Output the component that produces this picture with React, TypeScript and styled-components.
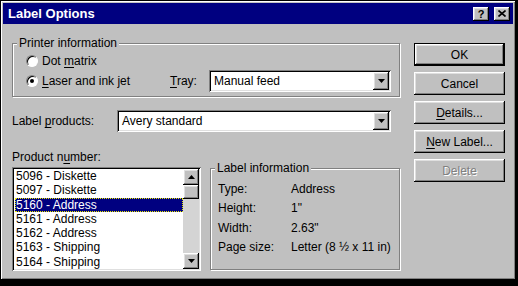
import { Fragment } from "react";
import styled, { createGlobalStyle, css } from "styled-components";

const GlobalStyle = createGlobalStyle`
  html, body { margin: 0; padding: 0; background: #000; }
  body {
    font-family: "Liberation Sans", Arial, sans-serif;
    font-size: 12px;
    color: #000;
  }
`;

const raised = css`
  box-shadow: inset -1px -1px #000, inset 1px 1px #fff, inset -2px -2px #808080,
    inset 2px 2px #dfdfdf;
`;

const sunken = css`
  box-shadow: inset 1px 1px #808080, inset -1px -1px #fff, inset 2px 2px #000,
    inset -2px -2px #dfdfdf;
`;

const Window = styled.div`
  width: 516px;
  height: 280px;
  box-sizing: border-box;
  background: #c0c0c0;
  border: 1px solid #000;
  box-shadow: inset 1px 1px #fff, inset -1px -1px #808080;
  padding: 2px;
  display: flex;
  flex-direction: column;
`;

const TitleBar = styled.div`
  height: 21px;
  background: #000080;
  display: flex;
  align-items: center;
  padding: 0 3px 0 5px;
`;

const Title = styled.div`
  flex: 1;
  color: #fff;
  font-weight: bold;
  font-size: 13px;
`;

const TitleButton = styled.div<{ $gap?: number }>`
  width: 16px;
  height: 14px;
  background: #c0c0c0;
  ${raised};
  display: flex;
  align-items: center;
  justify-content: center;
  font-weight: bold;
  font-size: 11px;
  margin-left: ${(p) => p.$gap ?? 0}px;
`;

const Body = styled.div`
  display: grid;
  grid-template-columns: 388px 91px;
  column-gap: 14px;
  padding: 19px 0 0 9px;
`;

const LeftColumn = styled.div`
  display: flex;
  flex-direction: column;
`;

const Group = styled.div<{ $padTop: number }>`
  position: relative;
  border: 1px solid #808080;
  box-shadow: inset 1px 1px #fff, 1px 1px #fff;
  padding: ${(p) => p.$padTop}px 8px 4px 13px;
`;

const Caption = styled.span`
  position: absolute;
  top: -7px;
  left: 4px;
  padding: 0 2px;
  line-height: 13px;
  background: #c0c0c0;
`;

const RadioRow = styled.div<{ $h: number }>`
  height: ${(p) => p.$h}px;
  display: flex;
  align-items: center;
`;

const RadioLabel = styled.label`
  width: 144px;
  display: flex;
  align-items: center;
  gap: 4px;
`;

const RadioCircle = styled.span<{ $checked?: boolean }>`
  width: 12px;
  height: 12px;
  border-radius: 50%;
  box-sizing: border-box;
  background: #fff;
  border: 1px solid;
  border-color: #808080 #fff #fff #808080;
  box-shadow: inset 1px 1px #000;
  display: flex;
  align-items: center;
  justify-content: center;
  &::after {
    content: "";
    width: 4px;
    height: 4px;
    border-radius: 50%;
    background: ${(p) => (p.$checked ? "#000" : "transparent")};
  }
`;

const Key = styled.span`
  text-decoration: underline;
  text-underline-offset: 2px;
`;

const FieldLabel = styled.span<{ $w: number }>`
  width: ${(p) => p.$w}px;
  flex: none;
`;

const Combo = styled.div<{ $w: number }>`
  width: ${(p) => p.$w}px;
  height: 22px;
  box-sizing: border-box;
  background: #fff;
  ${sunken};
  display: flex;
  align-items: center;
  padding: 2px 2px 2px 5px;
`;

const ComboText = styled.span`
  flex: 1;
`;

const DropButton = styled.span`
  width: 16px;
  height: 18px;
  background: #c0c0c0;
  ${raised};
  display: flex;
  align-items: center;
  justify-content: center;
`;

const ProductsRow = styled.div`
  margin-top: 13px;
  display: flex;
  align-items: center;
`;

const BottomSection = styled.div`
  margin-top: 18px;
  display: grid;
  grid-template-columns: 189px 190px;
  column-gap: 9px;
  align-items: start;
`;

const ListColumn = styled.div`
  display: flex;
  flex-direction: column;
`;

const ListCaption = styled.div`
  line-height: 14px;
  margin-bottom: 3px;
`;

const ListBox = styled.div`
  height: 104px;
  box-sizing: border-box;
  background: #fff;
  ${sunken};
  padding: 2px;
  display: flex;
`;

const Items = styled.div`
  flex: 1;
  padding-left: 1px;
`;

const Item = styled.div<{ $selected?: boolean }>`
  height: 14.3px;
  line-height: 14px;
  padding-left: 1px;
  box-sizing: border-box;
  background: ${(p) => (p.$selected ? "#000080" : "transparent")};
  color: ${(p) => (p.$selected ? "#fff" : "#000")};
  outline: ${(p) => (p.$selected ? "1px dotted #e8e800" : "none")};
  outline-offset: -1px;
`;

const ScrollBar = styled.div`
  width: 16px;
  display: flex;
  flex-direction: column;
  background: #d4d4d4;
`;

const ScrollButton = styled.div<{ $h: number }>`
  height: ${(p) => p.$h}px;
  background: #c0c0c0;
  ${raised};
  display: flex;
  align-items: center;
  justify-content: center;
`;

const ScrollTrack = styled.div`
  flex: 1;
`;

const InfoGroup = styled(Group)`
  margin-top: 18px;
  height: 102px;
  box-sizing: border-box;
  padding-left: 7px;
`;

const InfoGrid = styled.div`
  display: grid;
  grid-template-columns: 73px auto;
  grid-auto-rows: 19.5px;
  align-items: center;
`;

const ButtonColumn = styled.div`
  display: flex;
  flex-direction: column;
  gap: 6px;
`;

const PushButton = styled.div<{ $default?: boolean; $disabled?: boolean }>`
  height: 23px;
  box-sizing: border-box;
  background: #c0c0c0;
  ${raised};
  display: flex;
  align-items: center;
  justify-content: center;
  color: ${(p) => (p.$disabled ? "#808080" : "#000")};
  text-shadow: ${(p) => (p.$disabled ? "1px 1px #fff" : "none")};
  border: ${(p) => (p.$default ? "1px solid #000" : "none")};
`;

const DownArrow = () => (
  <svg width="7" height="4" viewBox="0 0 7 4">
    <path d="M0 0h7L3.5 4z" fill="#000" />
  </svg>
);

const UpArrow = () => (
  <svg width="7" height="4" viewBox="0 0 7 4">
    <path d="M3.5 0L7 4H0z" fill="#000" />
  </svg>
);

const products = [
  "5096 - Diskette",
  "5097 - Diskette",
  "5160 - Address",
  "5161 - Address",
  "5162 - Address",
  "5163 - Shipping",
  "5164 - Shipping",
];

const info: [string, string][] = [
  ["Type:", "Address"],
  ["Height:", "1\""],
  ["Width:", "2.63\""],
  ["Page size:", "Letter (8 ½ x 11 in)"],
];

export default function App() {
  return (
    <>
      <GlobalStyle />
      <Window>
        <TitleBar>
          <Title>Label Options</Title>
          <TitleButton>?</TitleButton>
          <TitleButton $gap={5}>
            <svg width="8" height="7" viewBox="0 0 8 7">
              <path d="M0.5 0.5L7.5 6.5M7.5 0.5L0.5 6.5" stroke="#000" strokeWidth="1.6" />
            </svg>
          </TitleButton>
        </TitleBar>
        <Body>
          <LeftColumn>
            <Group $padTop={8}>
              <Caption>Printer information</Caption>
              <RadioRow $h={18}>
                <RadioLabel>
                  <RadioCircle />
                  <span>
                    Dot <Key>m</Key>atrix
                  </span>
                </RadioLabel>
              </RadioRow>
              <RadioRow $h={22}>
                <RadioLabel>
                  <RadioCircle $checked />
                  <span>
                    <Key>L</Key>aser and ink jet
                  </span>
                </RadioLabel>
                <FieldLabel $w={39}>
                  <Key>T</Key>ray:
                </FieldLabel>
                <Combo $w={182}>
                  <ComboText>Manual feed</ComboText>
                  <DropButton>
                    <DownArrow />
                  </DropButton>
                </Combo>
              </RadioRow>
            </Group>
            <ProductsRow>
              <FieldLabel $w={105}>
                Label <Key>p</Key>roducts:
              </FieldLabel>
              <Combo $w={274}>
                <ComboText>Avery standard</ComboText>
                <DropButton>
                  <DownArrow />
                </DropButton>
              </Combo>
            </ProductsRow>
            <BottomSection>
              <ListColumn>
                <ListCaption>
                  Product n<Key>u</Key>mber:
                </ListCaption>
                <ListBox>
                  <Items>
                    {products.map((p, i) => (
                      <Item key={p} $selected={i === 2}>
                        {p}
                      </Item>
                    ))}
                  </Items>
                  <ScrollBar>
                    <ScrollButton $h={16}>
                      <UpArrow />
                    </ScrollButton>
                    <ScrollButton $h={14} />
                    <ScrollTrack />
                    <ScrollButton $h={16}>
                      <DownArrow />
                    </ScrollButton>
                  </ScrollBar>
                </ListBox>
              </ListColumn>
              <InfoGroup $padTop={10}>
                <Caption>Label information</Caption>
                <InfoGrid>
                  {info.map(([k, v]) => (
                    <Fragment key={k}>
                      <span>{k}</span>
                      <span>{v}</span>
                    </Fragment>
                  ))}
                </InfoGrid>
              </InfoGroup>
            </BottomSection>
          </LeftColumn>
          <ButtonColumn>
            <PushButton $default>OK</PushButton>
            <PushButton>Cancel</PushButton>
            <PushButton>
              <span>
                <Key>D</Key>etails...
              </span>
            </PushButton>
            <PushButton>
              <span>
                <Key>N</Key>ew Label...
              </span>
            </PushButton>
            <PushButton $disabled>Delete</PushButton>
          </ButtonColumn>
        </Body>
      </Window>
    </>
  );
}
